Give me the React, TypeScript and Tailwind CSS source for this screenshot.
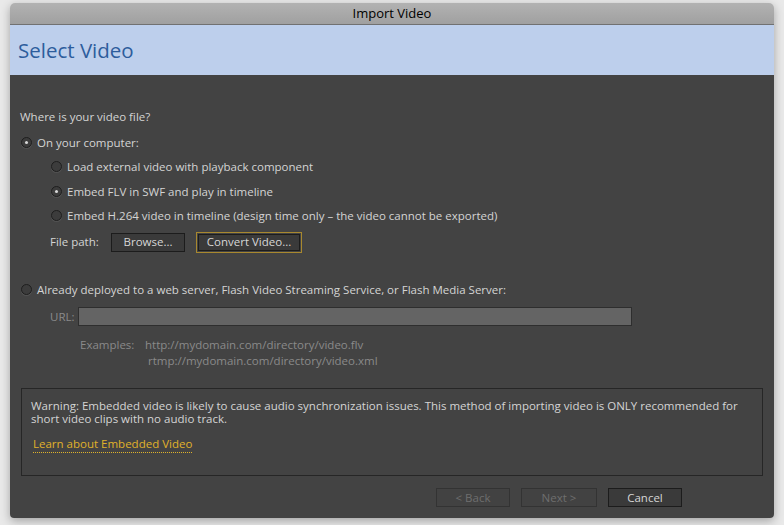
import React from "react";

function Radio({ checked }: { checked?: boolean }) {
  return (
    <span className="w-[11px] h-[11px] rounded-full border border-[#1e1e1e] bg-[#3c3c3c] flex items-center justify-center shrink-0 shadow-[0_1px_0_rgba(255,255,255,0.08)]">
      {checked && <span className="w-[3px] h-[3px] rounded-full bg-[#d8d8d8]" />}
    </span>
  );
}

function Btn({ children, w, disabled, focus }: { children: React.ReactNode; w: string; disabled?: boolean; focus?: boolean }) {
  const base = "h-[19px] flex items-center justify-center text-[11.5px] leading-none border " + w;
  if (disabled)
    return <div className={base + " border-[#333333] bg-[#424242] text-[#6e6e6e]"}>{children}</div>;
  if (focus)
    return (
      <div className={"h-[21px] p-px border border-[#a8882e] " + w}>
        <div className="h-full flex items-center justify-center text-[11.5px] leading-none border border-[#1c1c1c] bg-[#3a3a3a] text-[#d6d6d6]">
          {children}
        </div>
      </div>
    );
  return <div className={base + " border-[#1c1c1c] bg-[#3a3a3a] text-[#d6d6d6]"}>{children}</div>;
}

export default function App() {
  return (
    <div className="w-[784px] h-[525px] bg-[#e9e9e9] pt-[3px] pl-[10px]" style={{ fontFamily: '"Open Sans", "Noto Sans", sans-serif' }}>
      <div className="w-[764px] h-[515px] flex flex-col rounded-t-[5px] rounded-b-[4px] overflow-hidden shadow-[0_3px_10px_rgba(0,0,0,0.3)]">
        <div className="shrink-0 h-[22px] bg-gradient-to-b from-[#b2b2b2] to-[#a0a0a0] border-b border-[#717171] flex items-center justify-center text-[13px] text-black leading-none">
          Import Video
        </div>
        <div className="shrink-0 h-[50px] bg-[#bdcfec] flex items-center pl-[8px] text-[20.5px] text-[#2d5d9c] leading-none">
          Select Video
        </div>
        <div className="flex-1 bg-[#434343] text-[11.5px] text-[#d4d4d4] leading-none flex flex-col px-[10px]">
          <div className="mt-[36px]">Where is your video file?</div>
          <div className="mt-[14px] flex items-center gap-[5px] pl-[1px]">
            <Radio checked />
            <span>On your computer:</span>
          </div>
          <div className="mt-[13px] flex flex-col gap-[13px] pl-[31px]">
            <div className="flex items-center gap-[5px]">
              <Radio />
              <span>Load external video with playback component</span>
            </div>
            <div className="flex items-center gap-[5px]">
              <Radio checked />
              <span>Embed FLV in SWF and play in timeline</span>
            </div>
            <div className="flex items-center gap-[5px]">
              <Radio />
              <span>Embed H.264 video in timeline (design time only – the video cannot be exported)</span>
            </div>
          </div>
          <div className="mt-[10px] flex items-center pl-[30px]">
            <span className="w-[61px]">File path:</span>
            <Btn w="w-[74px]">Browse...</Btn>
            <div className="w-[11px]" />
            <Btn w="w-[106px]" focus>Convert Video...</Btn>
          </div>
          <div className="mt-[31px] flex items-center gap-[5px] pl-[1px]">
            <Radio />
            <span>Already deployed to a web server, Flash Video Streaming Service, or Flash Media Server:</span>
          </div>
          <div className="mt-[12px] flex items-center pl-[30px]">
            <span className="w-[28px] text-[#8a8a8a]">URL:</span>
            <div className="w-[554px] h-[19px] bg-[#646464] border border-[#2e2e2e]" />
          </div>
          <div className="mt-[13px] flex pl-[60px] text-[#8a8a8a]">
            <span className="w-[65px]">Examples:</span>
            <div className="flex flex-col gap-[4px]">
              <span>http://mydomain.com/directory/video.flv</span>
              <span className="pl-[3px]">rtmp://mydomain.com/directory/video.xml</span>
            </div>
          </div>
          <div className="mt-[22px] ml-[1px] w-[742px] h-[88px] shrink-0 border border-[#262626] px-[9px] pt-[10px]">
            <p className="leading-[13px] text-[#d4d4d4]">
              Warning: Embedded video is likely to cause audio synchronization issues. This method of importing video is ONLY recommended for short video clips with no audio track.
            </p>
            <div className="mt-[13px] pl-[2px]">
              <span className="text-[#e0b22a] border-b border-dotted border-[#e0b22a] pb-px">Learn about Embedded Video</span>
            </div>
          </div>
          <div className="mt-[12px] flex justify-end pr-[82px] gap-[11px]">
            <Btn w="w-[74px]" disabled>&lt; Back</Btn>
            <Btn w="w-[76px]" disabled>Next &gt;</Btn>
            <Btn w="w-[74px]">Cancel</Btn>
          </div>
        </div>
      </div>
    </div>
  );
}
